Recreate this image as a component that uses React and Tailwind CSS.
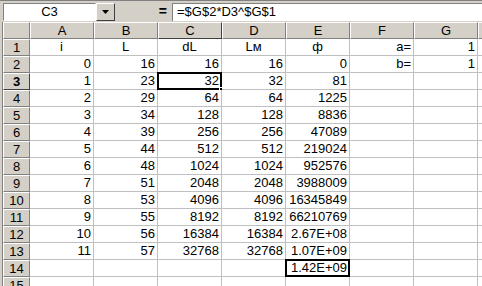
import React from "react";

const cols = ["A", "B", "C", "D", "E", "F", "G"];

const rows = [
  [{ v: "i", c: true }, { v: "L", c: true }, { v: "dL", c: true }, { v: "Lм", c: true }, { v: "ф", c: true }, { v: "a=" }, { v: "1" }],
  [0, 16, 16, 16, 0, "b=", 1],
  [1, 23, 32, 32, 81],
  [2, 29, 64, 64, 1225],
  [3, 34, 128, 128, 8836],
  [4, 39, 256, 256, 47089],
  [5, 44, 512, 512, 219024],
  [6, 48, 1024, 1024, 952576],
  [7, 51, 2048, 2048, 3988009],
  [8, 53, 4096, 4096, 16345849],
  [9, 55, 8192, 8192, 66210769],
  [10, 56, 16384, 16384, "2.67E+08"],
  [11, 57, 32768, 32768, "1.07E+09"],
  ["", "", "", "", "1.42E+09"],
  [],
];

const Cell = ({ cell, boxed, selected }) => {
  const obj = cell && typeof cell === "object" ? cell : { v: cell ?? "" };
  return (
    <div className="relative w-[64px] h-[17px] shrink-0 border-r border-b border-[#c0c0c0] bg-white">
      <div
        className={`h-full px-[2px] leading-[16px] whitespace-nowrap ${
          obj.c ? "text-center" : "text-right"
        }`}
      >
        {obj.v}
      </div>
      {boxed && (
        <div className="absolute -left-[1px] -top-[1px] w-[65px] h-[18px] border-2 border-black" />
      )}
      {selected && (
        <>
          <div className="absolute -left-[1px] -top-[1px] w-[65px] h-[18px] border-2 border-black" />
          <div className="absolute -right-[3px] -bottom-[3px] w-[5px] h-[5px] bg-black border border-white" />
        </>
      )}
    </div>
  );
};

export default function App() {
  return (
    <div
      className="w-[482px] h-[286px] overflow-hidden bg-[#d4d0c8] text-[13px] text-black"
      style={{ fontFamily: '"Liberation Sans", Arial, sans-serif' }}
    >
      {/* formula bar */}
      <div className="h-[22px] flex items-center pl-[3px] border-t border-[#808080]">
        <div className="w-[93px] h-[18px] bg-white border-t border-l border-[#808080] border-b border-r border-b-white border-r-white flex items-center justify-center">
          C3
        </div>
        <div className="w-[19px] h-[18px] bg-[#d4d0c8] border border-t-white border-l-white border-r-[#404040] border-b-[#404040] flex items-center justify-center">
          <svg width="7" height="4" viewBox="0 0 7 4">
            <path d="M0 0h7L3.5 4z" fill="black" />
          </svg>
        </div>
        <div className="w-[57px] h-[18px] flex items-center justify-end pr-[5px] font-bold text-[14px]">=</div>
        <div className="flex-1 h-[18px] bg-white border-t border-l border-[#808080] flex items-center pl-[4px] whitespace-nowrap">
          =$G$2*D3^$G$1
        </div>
      </div>

      {/* sheet */}
      <div className="flex">
        <div className="w-[3px] shrink-0 border-r border-[#808080]" />
        <div className="flex flex-col">
          {/* column headers */}
          <div className="flex h-[17px]">
            <div className="w-[27px] shrink-0 border-t border-l border-white border-r border-b border-r-[#808080] border-b-[#808080] bg-[#d4d0c8]" />
            {[...cols, ""].map((c) => (
              <div
                key={c || "x"}
                className={`w-[64px] shrink-0 flex items-center justify-center bg-[#d4d0c8] border-t border-l border-white border-r border-b ${
                  c === "C"
                    ? "border-r-[#404040] border-b-[#404040]"
                    : "border-r-[#808080] border-b-[#808080]"
                }`}
              >
                {c}
              </div>
            ))}
          </div>
          {rows.map((r, ri) => (
            <div key={ri} className="flex h-[17px]">
              <div
                className={`w-[27px] shrink-0 flex items-center justify-center bg-[#d4d0c8] border-t border-l border-white border-r border-b ${
                  ri === 2
                    ? "border-r-[#404040] border-b-[#404040] font-bold"
                    : "border-r-[#808080] border-b-[#808080]"
                }`}
              >
                {ri + 1}
              </div>
              {cols.map((c, ci) => (
                <Cell
                  key={c}
                  cell={r[ci]}
                  selected={ri === 2 && ci === 2}
                  boxed={ri === 13 && ci === 4}
                />
              ))}
              <div className="w-[64px] shrink-0 border-r border-b border-[#c0c0c0] bg-white" />
            </div>
          ))}
        </div>
      </div>
    </div>
  );
}
